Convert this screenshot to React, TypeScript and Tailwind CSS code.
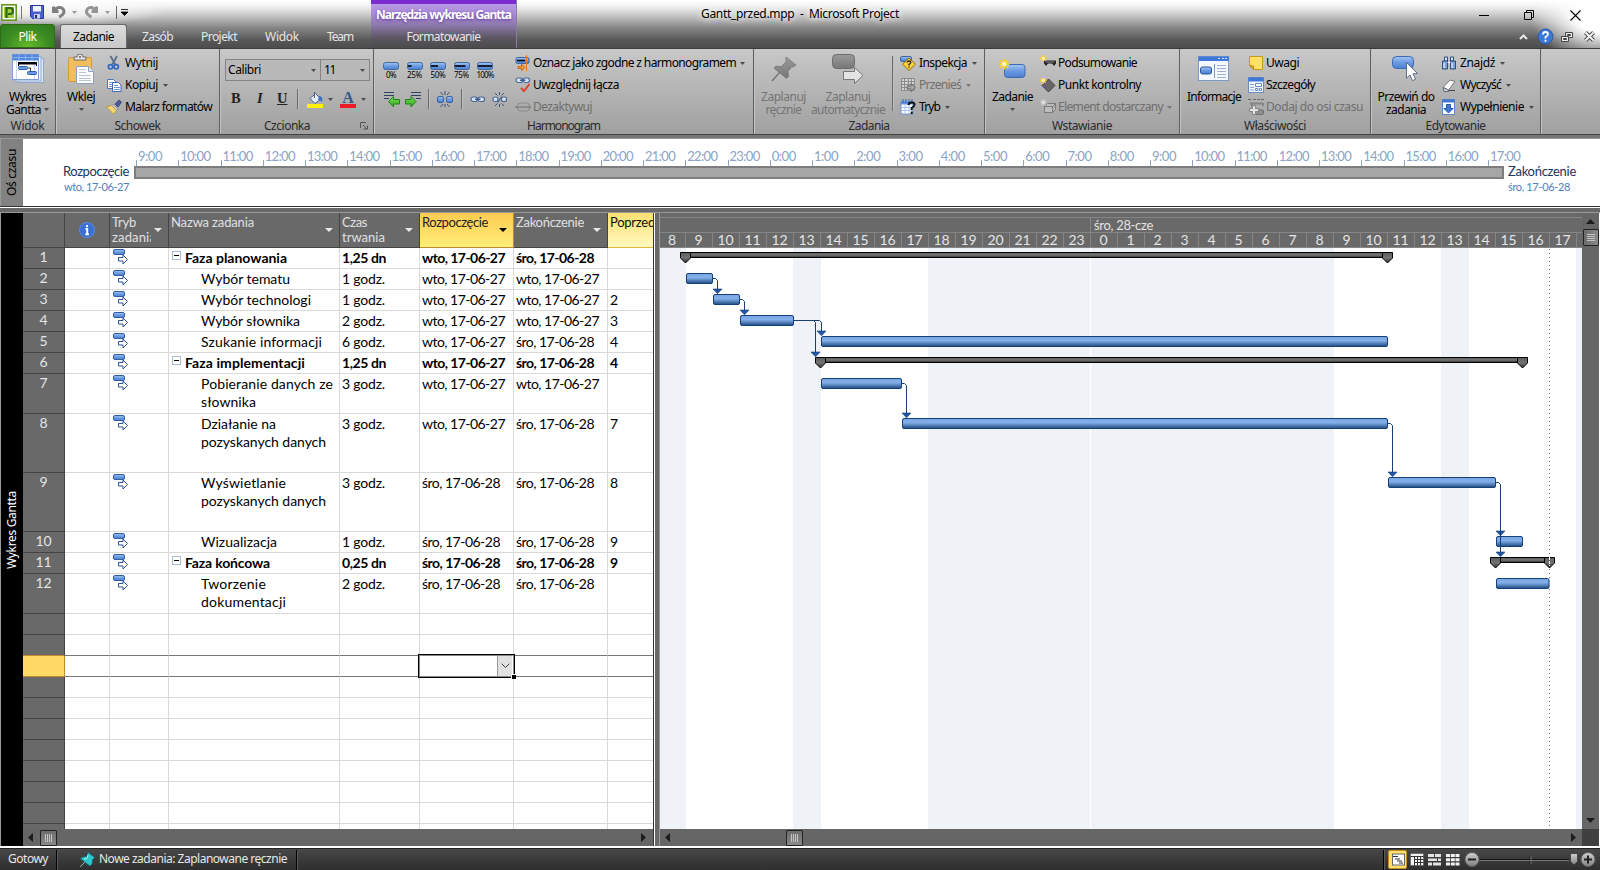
import React, { useLayoutEffect, useRef } from "react";

type TProps = { w?: number; children: string; className?: string };

/** Text run whose tracking is fitted to a given width. */
function T({ w, children, className = "" }: TProps) {
  const ref = useRef<HTMLSpanElement>(null);
  useLayoutEffect(() => {
    const el = ref.current;
    if (!el || !w) return;
    el.style.letterSpacing = "0px";
    const natural = el.getBoundingClientRect();
    const size = Math.max(natural.width, natural.height > 40 ? natural.height : 0);
    const s = (w - size) / children.length;
    el.style.letterSpacing = `${s.toFixed(3)}px`;
  }, [w, children]);
  return (
    <span ref={ref} className={`inline-block shrink-0 whitespace-pre ${className}`}>
      {children}
    </span>
  );
}

function Arrow({ className = "text-[#4c4c4c]" }: { className?: string }) {
  return (
    <svg width="5" height="3" viewBox="0 0 5 3" className={`shrink-0 ${className}`}>
      <path d="M0 0h5L2.5 3z" fill="currentColor" />
    </svg>
  );
}

function Defs() {
  return (
    <svg width="0" height="0" className="absolute">
      <defs>
        <linearGradient id="blue" x1="0" y1="0" x2="0" y2="1">
          <stop offset="0" stopColor="#a4c6f4" />
          <stop offset="0.5" stopColor="#6b9ae0" />
          <stop offset="1" stopColor="#4a7fd0" />
        </linearGradient>
        <linearGradient id="task" x1="0" y1="0" x2="0" y2="1">
          <stop offset="0" stopColor="#7aa7e2" />
          <stop offset="0.42" stopColor="#82afe9" />
          <stop offset="0.55" stopColor="#6c99d2" />
          <stop offset="1" stopColor="#1f4a80" />
        </linearGradient>
        <linearGradient id="sum" x1="0" y1="0" x2="0" y2="1">
          <stop offset="0" stopColor="#5c5c5c" />
          <stop offset="0.5" stopColor="#747474" />
          <stop offset="1" stopColor="#303030" />
        </linearGradient>
        <linearGradient id="gray" x1="0" y1="0" x2="0" y2="1">
          <stop offset="0" stopColor="#9a9a9a" />
          <stop offset="1" stopColor="#777" />
        </linearGradient>
        <linearGradient id="green" x1="0" y1="0" x2="0" y2="1">
          <stop offset="0" stopColor="#7be05a" />
          <stop offset="1" stopColor="#2ba51c" />
        </linearGradient>
        <linearGradient id="knob" x1="0" y1="0" x2="0" y2="1">
          <stop offset="0" stopColor="#cfcfcf" />
          <stop offset="1" stopColor="#808080" />
        </linearGradient>
      </defs>
    </svg>
  );
}

function Svg({ w = 16, h = 16, children, className = "" }: { w?: number; h?: number; children: React.ReactNode; className?: string }) {
  return (
    <svg width={w} height={h} viewBox={`0 0 ${w} ${h}`} className={`shrink-0 ${className}`}>
      {children}
    </svg>
  );
}

const Star = ({ s = 1, gray = false }: { s?: number; gray?: boolean }) => (
  <g transform={`scale(${s})`} stroke={gray ? "#c9c9c9" : "#ffd21e"} strokeWidth="1.4">
    <path d="M4 0v8M0 4h8M1 1l6 6M7 1L1 7" />
    <circle cx="4" cy="4" r="1.8" fill={gray ? "#e0e0e0" : "#fff6b0"} stroke="none" />
  </g>
);

const IcoGantt = () => (
  <Svg w={32} h={30}>
    <rect x="5.5" y="4.500" width="26" height="24" fill="#dfe9f7" stroke="#8fa9d0" />
    <rect x="3" y="2.500" width="26" height="24.500" fill="#e8f0fb" stroke="#8fa9d0" />
    <rect x="0.5" y="0.5" width="26" height="25" fill="#fff" stroke="#7f9fd4" />
    <path d="M.5.500h26v6H.5z" fill="#4f86e0" />
    <path d="M7 1v5M13.500 1v5M20 1v5M1 3.500h25" stroke="#8fb4ee" />
    <path d="M4.500 7v18M22.500 7v18" stroke="#c9d8ee" />
    <path d="M6 8h19v2.500H6z" fill="#000" />
    <path d="M6.500 8v4M24.500 8v4" stroke="#000" strokeWidth="1" />
    <rect x="6.500" y="12.500" width="9" height="3" rx="1" fill="#6b9ae0" stroke="#2b5fa8" />
    <path d="M16 14h2.500v3.500" stroke="#333" fill="none" />
    <rect x="15.500" y="17.500" width="9" height="3" rx="1" fill="#6b9ae0" stroke="#2b5fa8" />
  </Svg>
);

const IcoPaste = () => (
  <Svg w={28} h={31}>
    <rect x="1.500" y="3.500" width="23" height="24" rx="1.500" fill="#f2bd5c" stroke="#d59a35" />
    <path d="M7 6V3h3a2.500 2.500 0 0 1 6 0h3v3z" fill="#e6e6e6" stroke="#6b6b6b" />
    <circle cx="13" cy="3" r="1" fill="#555" />
    <path d="M9.500 12.500h12l5 5v12h-17z" fill="#fff" stroke="#8ea0bd" />
    <path d="M21.500 12.500v5h5" fill="#dfe7f3" stroke="#8ea0bd" />
    <path d="M12 15.500h7M12 18.500h7M12 21.500h12M12 24.500h12M12 26.500h12" stroke="#b9c3d6" />
  </Svg>
);

const IcoCut = () => (
  <Svg>
    <path d="M4.500 1l5 9M11 1L6 10" stroke="#5d6f8c" strokeWidth="1.800" />
    <circle cx="4.500" cy="11.800" r="2.200" fill="none" stroke="#2f66c0" strokeWidth="1.700" />
    <circle cx="10.200" cy="11.800" r="2.200" fill="none" stroke="#2f66c0" strokeWidth="1.700" />
  </Svg>
);
const IcoCopy = () => (
  <Svg>
    <path d="M1.500 2.500h6l2 2v7h-8z" fill="#fff" stroke="#4a76be" />
    <path d="M3 5.500h4M3 7.500h5M3 9.500h5" stroke="#6f97d8" />
    <path d="M6.500 5.500h6l2.500 2.500v6.500H6.500z" fill="#fff" stroke="#3d6bb5" />
    <path d="M8 8.500h4M8 10.500h6M8 12.500h6" stroke="#6f97d8" />
  </Svg>
);
const IcoBrush = () => (
  <Svg>
    <path d="M9 5l4-4 2.500 2L12 8z" fill="#4d5aa8" stroke="#30376e" strokeWidth=".7" />
    <path d="M7 5l5 5-1.500 1.500-5-5z" fill="#c9c9d8" stroke="#777" strokeWidth=".6" />
    <path d="M5.500 6.500l5 5L7 15C5 12 3 10 0 8z" fill="#f3d877" stroke="#b98c24" strokeWidth=".7" />
  </Svg>
);
const IcoBucket = () => (
  <Svg w={16} h={17}>
    <path d="M3 7.500l5.500-5L14 8l-6 4.500z" fill="#e7edf7" stroke="#4c617f" />
    <path d="M7.500 1v6" stroke="#4c617f" />
    <path d="M12 5c3 0 4 3 3 6-1-1-2-2-4-2z" fill="#3872c8" />
    <path d="M0 13h16v4H0z" fill="#fff200" />
  </Svg>
);
const IcoFontColor = () => (
  <div className="flex w-4 shrink-0 flex-col items-center">
    <span className="h-[13px] font-['Liberation_Serif',serif] text-[16px] leading-[13px] font-bold text-[#35588f]">A</span>
    <span className="h-1 w-4 bg-[#ed1c24]" />
  </div>
);
const IcoPct = ({ n }: { n: number }) => (
  <div className="flex w-4 shrink-0 flex-col items-center">
    <Svg w={16} h={8}>
      <rect x=".5" y=".5" width="15" height="7" rx="2" fill="url(#blue)" stroke="#41689f" />
      {n > 0 && <path d={`M1 4h${(n / 100) * 14}`} stroke="#000" strokeWidth="1.600" />}
    </Svg>
    <T w={n === 0 ? 10 : n === 100 ? 17 : 15} className="h-[9px] text-[8px] leading-[10px] text-black">{`${n}%`}</T>
  </div>
);
const IcoDent = ({ out = false }: { out?: boolean }) => (
  <Svg w={17} h={18}>
    <path d={out ? "M1 2.500h10M1 5.500h10M1 8.500h5" : "M6 2.500h10M6 5.500h10M11 8.500h5"} stroke="#2f4161" strokeWidth="1.200" />
    {out ? (
      <path d="M5.500 11.500l5-5v3h6v4.500h-6v3z" fill="url(#green)" stroke="#218614" />
    ) : (
      <path d="M11 11.500l-5-5v3H.5v4.500H6v3z" fill="url(#green)" stroke="#218614" />
    )}
  </Svg>
);
const IcoSplit = () => (
  <Svg>
    <rect x=".5" y="5.500" width="6" height="6" rx="1.500" fill="url(#blue)" stroke="#3b65a5" />
    <rect x="9.500" y="5.500" width="6" height="6" rx="1.500" fill="url(#blue)" stroke="#3b65a5" />
    <path d="M8 0v4M8 13v3M3.500 1l2.500 3M12.500 1L10 4M3.500 16L6 13M12.500 16L10 13" stroke="#3d5577" />
  </Svg>
);
const Chain = () => (
  <>
    <rect x="1" y="5" width="6.500" height="4.500" rx="2.200" fill="#d9e4f5" stroke="#4a6796" strokeWidth="1.200" />
    <rect x="8" y="5" width="6.500" height="4.500" rx="2.200" fill="#d9e4f5" stroke="#4a6796" strokeWidth="1.200" />
    <path d="M5 7.200h5.500" stroke="#3b5787" strokeWidth="1.400" />
  </>
);
const IcoLink = () => (
  <Svg h={15}>
    <Chain />
  </Svg>
);
const IcoUnlink = () => (
  <Svg h={15}>
    <rect x="1" y="5" width="5" height="4.500" rx="2" fill="#d9e4f5" stroke="#4a6796" strokeWidth="1.200" />
    <rect x="9.500" y="5" width="5" height="4.500" rx="2" fill="#d9e4f5" stroke="#4a6796" strokeWidth="1.200" />
    <path d="M7.500 0v3M7.500 12v3M3 1l2.500 2.500M12 1L9.500 3.500M3 14l2.500-2.500M12 14l-2.500-2.500M9.500 4.500L6 10.500" stroke="#3d5577" />
  </Svg>
);
const IcoOnTrack = () => (
  <Svg>
    <rect x="1" y="2.500" width="13" height="6" rx="1.500" fill="url(#blue)" stroke="#41689f" />
    <path d="M2 5.500h8" stroke="#000" strokeWidth="1.500" />
    <path d="M11.500 0v16" stroke="#e77b19" />
    <path d="M3 11.500h3.500V9L10 12.500 6.500 15.500V13.500H3z" fill="#ff9a2e" stroke="#b85a0c" strokeWidth=".8" />
  </Svg>
);
const IcoRespect = () => (
  <Svg>
    <g transform="translate(0,-4)">
      <Chain />
    </g>
    <path d="M6 11l3 3 5.500-7" fill="none" stroke="#e0402a" strokeWidth="2" />
  </Svg>
);
const IcoInactive = () => (
  <Svg>
    <rect x="2.500" y="4" width="12" height="8" rx="3" fill="none" stroke="#8a8a8a" />
    <path d="M0 8h16" stroke="#6f6f6f" />
  </Svg>
);
const IcoPinBig = () => (
  <Svg w={26} h={26}>
    <path d="M1 25l8-9" stroke="#777" strokeWidth="1.500" />
    <path d="M15 1l10 8-3 2-1-.5-4 5 .5 5-2 2L3 12l2-2 5 .8 5-4.800V3z" fill="url(#gray)" stroke="#6f6f6f" strokeWidth=".7" />
  </Svg>
);
const IcoAuto = () => (
  <Svg w={32} h={30}>
    <rect x=".5" y=".5" width="22" height="14" rx="4" fill="url(#gray)" stroke="#6d6d6d" />
    <path d="M11.500 17.500h11v-4l8.500 8-8.500 8v-4h-11z" fill="#e4e4e4" stroke="#777" />
  </Svg>
);
const IcoInspect = () => (
  <Svg>
    <rect x=".5" y="1.500" width="11" height="5" rx="1.500" fill="url(#blue)" stroke="#41689f" />
    <path d="M9 3l6.500 6.200L9 15.500 2.500 9.200z" fill="#ffd23c" stroke="#8d6b00" />
    <path d="M7.200 7.500q0-1.500 1.800-1.500t1.800 1.400q0 1-1.800 2v1M9 11.500v1.300" fill="none" stroke="#222" strokeWidth="1.300" />
  </Svg>
);
const IcoMove = () => (
  <Svg>
    <path d="M1.500 1.500h13v12h-13zM1.500 4.500h13M1.500 7.500h13M1.500 10.500h13M4.500 1.500v12M8.500 1.500v12M11.500 1.500v12" fill="#d3d3d3" stroke="#858585" strokeWidth=".9" />
    <path d="M7 9h4V6.500l4.500 4-4.500 4V12H7z" fill="#a5a5a5" stroke="#6b6b6b" />
  </Svg>
);
const IcoMode = () => (
  <Svg>
    <rect x="1" y="2.500" width="12" height="12.500" fill="#fff" stroke="#6e93cf" />
    <path d="M1 2.500h12v3H1z" fill="#5f8fe0" />
    <path d="M3 0v4M6 0v4M9 0v4M12 0v4" stroke="#3966b5" />
    <path d="M1 8.500h12M1 11.500h12M5 6v9M9 6v9" stroke="#a9c2e8" />
    <path d="M8.500 6q.3-2.500 3.200-2.500t2.800 2.300q0 1.500-2.800 3V11M11.700 12.500v2.500" fill="none" stroke="#111" strokeWidth="2" />
  </Svg>
);
const IcoNewTask = () => (
  <Svg w={27} h={20}>
    <rect x="5.500" y="5.500" width="20.500" height="13" rx="3" fill="url(#blue)" stroke="#3e69b0" />
    <Star s={1.3} />
  </Svg>
);
const IcoSummary = () => (
  <Svg>
    <path d="M4 5.500h12v3l-2 2.500-2-2.500H8L6 11 4 8.500z" fill="#222" />
    <path d="M5.500 7h9" stroke="#888" />
    <Star s={0.85} />
  </Svg>
);
const IcoMilestone = () => (
  <Svg>
    <path d="M8.500 2l6.500 6.500L8.500 15 2 8.500z" fill="#666" stroke="#444" />
    <Star s={0.85} />
  </Svg>
);
const IcoDeliver = () => (
  <Svg>
    <path d="M4.500 7.500h8v6h-8zM4.500 7.500l3-3h8l-3 3M15.500 4.500v6l-3 3" fill="#bdbdbd" stroke="#7b7b7b" />
    <Star s={0.85} gray />
  </Svg>
);
const IcoInfo = () => (
  <Svg w={32} h={26}>
    <rect x=".5" y=".5" width="30" height="24" fill="#f5f9ff" stroke="#7d9bc9" />
    <path d="M.5.500h30.500v4.500H.5z" fill="#3f78d8" />
    <path d="M20 2.500h2M24 2.500h2M27 2.500h2" stroke="#cfe0fa" />
    <rect x="2.500" y="11" width="11" height="7" rx="2" fill="url(#blue)" stroke="#2c5598" />
    <path d="M16.500 8v14" stroke="#7e99c4" />
    <path d="M19 9.500h9M19 12.500h9M19 15.500h9M19 18.500h9M19 21.500h9" stroke="#9fb1cd" />
  </Svg>
);
const IcoNote = () => (
  <Svg>
    <path d="M1.500 1.500h13v13h-9l-4-4z" fill="#ffdf67" stroke="#c99a1a" />
    <path d="M1.500 10.500l4 4v-3.500z" fill="#e2a921" stroke="#a9790e" strokeWidth=".7" />
  </Svg>
);
const IcoDetails = () => (
  <Svg>
    <rect x=".5" y=".5" width="15" height="15" fill="#eef4fd" stroke="#6b8cc0" />
    <path d="M.5.500h15v4H.5z" fill="#3f78d8" />
    <path d="M2 7.500h4M2 10.500h4M2 13h4" stroke="#8fa6cb" />
    <path d="M7.500 6.500h6v3h-6zM7.500 11.500h2.500v2H7.500zM11.500 11.500h2v2h-2z" fill="#fff" stroke="#6b8cc0" />
  </Svg>
);
const IcoTimelineAdd = () => (
  <Svg w={17}>
    <path d="M0 .500h3M5 .500h3M9 .500h3M13 .500h3" stroke="#666" />
    <path d="M2 4.500h13M4 4v4M15 4v3" stroke="#858585" strokeWidth="2" />
    <rect x="6.500" y="11" width="9" height="4.500" rx="1" fill="#8e8e8e" stroke="#6f6f6f" />
    <path d="M4.500 6.500h3v3h3v3h-3v3h-3v-3h-3v-3h3z" fill="#e3e3e3" stroke="#858585" />
  </Svg>
);
const IcoScroll = () => (
  <Svg w={28} h={26}>
    <rect x=".5" y=".5" width="21" height="12" rx="4" fill="url(#blue)" stroke="#3e69b0" />
    <path d="M14.500 6.500l11 11-4.500.3 2.500 5.500-3 1.400-2.500-5.700-3.500 3.200z" fill="#fff" stroke="#5c6f8f" />
  </Svg>
);
const IcoFind = () => (
  <Svg>
    <path d="M3.500 2h3v4h-3zM9.500 2h3v4h-3z" fill="#dce7f7" stroke="#2a4c86" />
    <path d="M1.500 6h5v8h-5zM9.500 6h5v8h-5z" fill="#7fa3dc" stroke="#2a4c86" />
    <path d="M6.500 7.500h3M3 8v5M11 8v5" stroke="#fff" />
  </Svg>
);
const IcoClear = () => (
  <Svg>
    <path d="M2 10.500L9 3l5 1.500-6.500 8.500z" fill="#fff" stroke="#777" />
    <path d="M2 10.500l5.500 2.500v1.500H3z" fill="#cdd8ea" stroke="#667" />
    <path d="M8 13.500h6" stroke="#444" />
  </Svg>
);
const IcoFill = () => (
  <Svg>
    <rect x="1.500" y=".5" width="12" height="15" fill="#fff" stroke="#5f86c6" />
    <path d="M1.500.500h12v3h-12z" fill="#3f78d8" />
    <path d="M5.500 5.500h4v4h2.500L7.500 14 3 9.500h2.500z" fill="#3f78d8" stroke="#2655a8" />
  </Svg>
);

function Row({ icon, text, w, arrow = false, dim = false, gap = "gap-[3px]" }: { icon: React.ReactNode; text: string; w: number; arrow?: boolean; dim?: boolean; gap?: string }) {
  return (
    <div className={`flex h-[22px] items-center ${gap} ${dim ? "text-[#6f6f6f]" : "text-black"}`}>
      {icon}
      <T w={w}>{text}</T>
      {arrow && <Arrow className={dim ? "ml-[2px] text-[#777]" : "ml-[2px] text-[#4c4c4c]"} />}
    </div>
  );
}

function Big({ icon, width, children, dim = false }: { icon: React.ReactNode; width: string; children: React.ReactNode; dim?: boolean }) {
  return (
    <div className={`flex shrink-0 flex-col items-center leading-[13px] ${width} ${dim ? "text-[#757575]" : "text-black"}`}>
      <div className="flex h-[38px] items-center justify-center pb-[4px]">{icon}</div>
      {children}
    </div>
  );
}

function Group({ width, label, lw, children, launcher = false }: { width: string; label: string; lw: number; children: React.ReactNode; launcher?: boolean }) {
  return (
    <div className={`flex h-[85px] shrink-0 flex-col border-r border-[#5f5f5f] pt-[3px] shadow-[1px_0_0_#c4c4c4] ${width}`}>
      <div className="flex h-[66px]">{children}</div>
      <div className="flex h-4 items-center justify-center text-[#2a2a2a]">
        <span className={launcher ? "flex flex-1 justify-center" : ""}>
          <T w={lw}>{label}</T>
        </span>
        {launcher && (
          <Svg w={16} h={8} className="mr-[3px]">
            <path d="M6.500 6V.500H12M9 3l4 4M13.500 3.500V7H9.500" stroke="#555" fill="none" />
          </Svg>
        )}
      </div>
    </div>
  );
}

function Sep({ className }: { className: string }) {
  return <span className={`w-px shrink-0 bg-[#6a6a6a] shadow-[1px_0_0_#c0c0c0] ${className}`} />;
}

function Ribbon() {
  return (
    <div className="flex h-[86px] border-b border-[#444] bg-linear-to-b from-[#c8c8c8] to-[#a0a0a0] text-[12px]">
      <Group width="w-14" label="Widok" lw={34}>
        <Big width="w-[55px]" icon={<IcoGantt />}>
          <T w={37}>Wykres</T>
          <span className="flex items-center gap-[3px]">
            <T w={35}>Gantta</T>
            <Arrow />
          </span>
        </Big>
      </Group>
      <Group width="w-[164px]" label="Schowek" lw={46}>
        <Big width="w-[50px]" icon={<IcoPaste />}>
          <T w={28}>Wklej</T>
          <span className="flex h-3 items-center">
            <Arrow />
          </span>
        </Big>
        <div className="flex flex-col">
          <Row icon={<IcoCut />} text="Wytnij" w={33} />
          <Row icon={<IcoCopy />} text="Kopiuj" w={33} arrow />
          <Row icon={<IcoBrush />} text="Malarz formatów" w={87} />
        </div>
      </Group>
      <Group width="w-[154px]" label="Czcionka" lw={46} launcher>
        <div className="flex flex-col pt-[7px] pl-[5px]">
          <div className="flex h-[22px] w-[145px] border border-[#858585] bg-[#b9b9b9]">
            <div className="flex w-[95px] items-center justify-between border-r border-[#858585] pr-1 pl-[2px]">
              <T w={33}>Calibri</T>
              <Arrow />
            </div>
            <div className="flex flex-1 items-center justify-between pr-1 pl-[3px]">
              <T w={11}>11</T>
              <Arrow />
            </div>
          </div>
          <div className="mt-[6px] flex h-6 items-center pl-[6px] font-['Liberation_Serif',serif] text-[14.500px] text-[#222]">
            <span className="w-6 font-bold">B</span>
            <span className="w-[22px] pl-[2px] font-bold italic">I</span>
            <span className="w-[15px] font-bold underline">U</span>
            <Sep className="mr-[9px] ml-[5px] h-5" />
            <IcoBucket />
            <span className="ml-[5px]">
              <Arrow />
            </span>
            <span className="ml-[7px]">
              <IcoFontColor />
            </span>
            <span className="ml-[5px]">
              <Arrow />
            </span>
          </div>
        </div>
      </Group>
      <Group width="w-[380px]" label="Harmonogram" lw={73}>
        <div className="flex w-[141px] flex-col pt-[10px] pl-[9px]">
          <div className="flex h-[17px] gap-[7.500px]">
            {[0, 25, 50, 75, 100].map((n) => (
              <IcoPct key={n} n={n} />
            ))}
          </div>
          <div className="mt-[10px] flex h-5 items-center">
            <IcoDent out />
            <span className="w-[5px]" />
            <IcoDent />
            <Sep className="mr-2 ml-[6px] h-5" />
            <IcoSplit />
            <Sep className="mr-2 ml-2 h-5" />
            <IcoLink />
            <span className="w-[6px]" />
            <IcoUnlink />
          </div>
        </div>
        <div className="flex flex-col">
          <Row icon={<IcoOnTrack />} text="Oznacz jako zgodne z harmonogramem" w={203} arrow gap="gap-[2px]" />
          <Row icon={<IcoRespect />} text="Uwzględnij łącza" w={86} gap="gap-[2px]" />
          <Row icon={<IcoInactive />} text="Dezaktywuj" w={59} dim gap="gap-[2px]" />
        </div>
      </Group>
      <Group width="w-[231px]" label="Zadania" lw={41}>
        <span className="w-[2px]" />
        <Big width="w-[55px]" icon={<IcoPinBig />} dim>
          <T w={45}>Zaplanuj</T>
          <T w={36}>ręcznie</T>
        </Big>
        <Big width="w-[74px]" icon={<IcoAuto />} dim>
          <T w={45}>Zaplanuj</T>
          <T w={74}>automatycznie</T>
        </Big>
        <Sep className="mt-[4px] mr-[7px] ml-[7px] h-[55px]" />
        <div className="flex flex-col">
          <Row icon={<IcoInspect />} text="Inspekcja" w={48} arrow />
          <Row icon={<IcoMove />} text="Przenieś" w={42} arrow dim />
          <Row icon={<IcoMode />} text="Tryb" w={21} arrow />
        </div>
      </Group>
      <Group width="w-[195px]" label="Wstawianie" lw={60}>
        <Big width="w-[55px]" icon={<IcoNewTask />}>
          <T w={41}>Zadanie</T>
          <span className="flex h-3 items-center">
            <Arrow />
          </span>
        </Big>
        <div className="flex flex-col">
          <Row icon={<IcoSummary />} text="Podsumowanie" w={79} gap="gap-[2px]" />
          <Row icon={<IcoMilestone />} text="Punkt kontrolny" w={83} gap="gap-[2px]" />
          <Row icon={<IcoDeliver />} text="Element dostarczany" w={105} arrow dim gap="gap-[2px]" />
        </div>
      </Group>
      <Group width="w-[191px]" label="Właściwości" lw={62}>
        <Big width="w-[68px]" icon={<IcoInfo />}>
          <T w={54}>Informacje</T>
        </Big>
        <div className="flex flex-col">
          <Row icon={<IcoNote />} text="Uwagi" w={33} gap="gap-[2px]" />
          <Row icon={<IcoDetails />} text="Szczegóły" w={49} gap="gap-[2px]" />
          <Row icon={<IcoTimelineAdd />} text="Dodaj do osi czasu" w={97} dim gap="gap-[1px]" />
        </div>
      </Group>
      <Group width="w-[170px]" label="Edytowanie" lw={60}>
        <Big width="w-[70px]" icon={<IcoScroll />}>
          <T w={57}>Przewiń do</T>
          <T w={40}>zadania</T>
        </Big>
        <div className="flex flex-col">
          <Row icon={<IcoFind />} text="Znajdź" w={35} arrow />
          <Row icon={<IcoClear />} text="Wyczyść" w={41} arrow />
          <Row icon={<IcoFill />} text="Wypełnienie" w={64} arrow />
        </div>
      </Group>
    </div>
  );
}

function TitleBar() {
  return (
    <div className="relative flex h-[49px] border-b border-[#3c3c3c] bg-[linear-gradient(to_bottom,#ffffff_0px,#f2f2f2_6px,#c4c4c4_16px,#858585_28px,#585858_40px,#4c4c4c_48px)] text-[12px]">
      <div className="flex w-[371px] shrink-0 flex-col bg-[radial-gradient(ellipse_110px_16px_at_60px_10px,#ffffffb0_40%,transparent)]">
        <div className="flex h-[25px] items-center pl-px">
          <Svg w={16} h={17}>
            <rect x=".8" y=".8" width="14.400" height="15.400" fill="#fff" stroke="#5d9413" strokeWidth="1.500" />
            <path d="M3 3h10v11H3z" fill="#9fca3a" />
            <path d="M5.500 14V4h3.500a2.900 2.900 0 0 1 0 6H7" fill="none" stroke="#2f6b0b" strokeWidth="2.200" />
          </Svg>
          <span className="mx-1 h-[13px] w-px bg-[#777]" />
          <Svg w={14} h={14} className="ml-1">
            <path d="M.5.500h13v13h-11l-2-2z" fill="#4a5fd0" stroke="#27359a" />
            <path d="M3 1h8v5.500H3z" fill="#eef3ff" />
            <path d="M4 9h6v4.500H4z" fill="#c9d2f0" />
            <path d="M5 10h2v3H5z" fill="#222a70" />
          </Svg>
          <Svg w={14} h={14} className="ml-2">
            <path d="M1.500 1.500v5h5M2 6C4.500 2 9 1.500 11 4s1 6-4 8" fill="none" stroke="#7f7f7f" strokeWidth="3" />
          </Svg>
          <span className="ml-[6px]">
            <Arrow className="text-[#999]" />
          </span>
          <Svg w={14} h={14} className="ml-2">
            <path d="M11.500 1.500v5h-5M11 6C8.500 2 4.500 1.500 2.500 4s-1 6 4 8" fill="none" stroke="#959595" strokeWidth="3" />
          </Svg>
          <span className="ml-[6px]">
            <Arrow className="text-[#999]" />
          </span>
          <span className="mx-1 ml-[6px] h-[13px] w-px bg-[#666]" />
          <Svg w={7} h={7}>
            <path d="M0 .500h7M0 3h7L3.500 6.500z" stroke="#000" fill="#000" strokeWidth=".8" />
          </Svg>
        </div>
        <div className="flex h-6 items-center text-[#e6e6e6]">
          <div className="flex h-6 w-[55px] items-center justify-center rounded-t-[3px] border border-[#2e6b12] bg-[radial-gradient(ellipse_at_bottom,#66bb2a,#3a8a22_60%,#2f7a20)] pt-px text-white">
            <T w={18}>Plik</T>
          </div>
          <div className="ml-[5px] flex h-6 w-[67px] items-center justify-center rounded-t-[3px] border border-b-0 border-[#6a6a6a] bg-linear-to-b from-[#dcdcdc] to-[#c8c8c8] pt-px text-black">
            <T w={41}>Zadanie</T>
          </div>
          <T w={31} className="ml-[15px] pt-[2px]">
            Zasób
          </T>
          <T w={36} className="ml-7 pt-[2px]">
            Projekt
          </T>
          <T w={34} className="ml-7 pt-[2px]">
            Widok
          </T>
          <T w={26} className="ml-7 pt-[2px]">
            Team
          </T>
        </div>
      </div>
      <div className="flex h-12 w-[146px] shrink-0 flex-col items-center border-r border-[#8a7aa5] bg-[linear-gradient(to_bottom,#b899e6_4px,#a98bd6_14px,#8b77a8_26px,#5b5660_38px,#4c4c4c_47px)]">
        <div className="h-1 w-full bg-[#7a2bd2]" />
        <div className="flex h-[21px] items-center pt-[2px] font-bold text-white [text-shadow:0_1px_3px_#5f35a0]">
          <T w={135}>Narzędzia wykresu Gantta</T>
        </div>
        <div className="flex h-6 items-center pt-[2px] text-[#e6e6e6]">
          <T w={74}>Formatowanie</T>
        </div>
      </div>
      <div className="flex flex-1 flex-col bg-[radial-gradient(ellipse_70px_50px_at_1083px_14px,#ffffff_35%,#ffffff00)]">
        <div className="flex h-[27px] items-center">
          <T w={198} className="ml-[184px] text-black [text-shadow:0_0_6px_#fff,0_0_8px_#fff]">
            {"Gantt_przed.mpp  -  Microsoft Project"}
          </T>
          <Svg w={102} h={12} className="mt-[2px] ml-[580px]">
            <path d="M0 6.500h10" stroke="#000" />
            <path d="M45.500 3.500h7v7h-7zM47.500 3.500v-2h7v7h-2" stroke="#000" fill="none" />
            <path d="M91.500 1.500l10 10M101.500 1.500l-10 10" stroke="#000" strokeWidth="1.100" />
          </Svg>
        </div>
        <div className="flex h-[19px] items-center">
          <Svg w={80} h={17} className="ml-[1002px]">
            <path d="M1 11l3.500-3.500L8 11" stroke="#e8e8e8" strokeWidth="2" fill="none" />
            <circle cx="26.500" cy="8.500" r="7.500" fill="#3c78d8" stroke="#2a59ad" />
            <path d="M24 6.500q0-2.500 2.500-2.500T29 6.300q0 1.400-2.500 2.700v1.500M26.500 11.700v2" stroke="#fff" strokeWidth="1.800" fill="none" />
            <path d="M46.500 4.500h7v5h-7z" stroke="#444" fill="#eee" />
            <path d="M48.500 6.500h3v1h-3z" stroke="#444" fill="#999" />
            <path d="M42.500 8.500h7v5h-7z" stroke="#444" fill="#eee" />
            <path d="M44.500 10.500h3v1h-3z" stroke="#444" fill="#999" />
            <path d="M66.500 4.500l8 8M74.500 4.500l-8 8" stroke="#4c4c4c" strokeWidth="4" />
            <path d="M66.500 4.500l8 8M74.500 4.500l-8 8" stroke="#f4f4f4" strokeWidth="2" />
          </Svg>
        </div>
      </div>
    </div>
  );
}

const LATO = "font-['Lato','Noto_Sans',sans-serif]";

function Timeline() {
  const hours = Array.from({ length: 33 }, (_, i) => (9 + i) % 24);
  return (
    <div className="flex h-[67px] border-l border-[#999] bg-white">
      <div className="flex w-[22px] items-center justify-center bg-[#828282]">
        <span className="rotate-180 text-[12px] text-black [writing-mode:vertical-rl]">
          <T w={47}>Oś czasu</T>
        </span>
      </div>
      <div className={`flex w-[111px] flex-col items-end pt-[23px] pr-[5px] ${LATO}`}>
        <T w={66} className="h-[17px] text-[13px] leading-[18px] text-[#17365d]">
          Rozpoczęcie
        </T>
        <T w={65} className="h-4 text-[11px] leading-4 text-[#4f81bd]">
          wto, 17-06-27
        </T>
      </div>
      <div className="flex w-[1370px] flex-col pt-[9px]">
        <div className="flex h-[18px] pl-[2px]">
          {hours.map((h, i) => (
            <div key={i} className="flex w-[42.250px] shrink-0 items-end">
              <span className="h-[6px] w-px bg-[#8ea5c5]" />
              <T w={h < 10 ? 25 : 31} className={`h-[18px] pl-px text-[13px] leading-4 text-[#8ba3c4] ${LATO}`}>
                {`${h}:00`}
              </T>
            </div>
          ))}
        </div>
        <div className="h-[13px] border-2 border-[#7d7d7d] bg-[#a6a6a6]" />
      </div>
      <div className={`flex flex-1 flex-col items-start pt-[23px] pl-1 ${LATO}`}>
        <T w={68} className="h-[17px] text-[13px] leading-[18px] text-[#17365d]">
          Zakończenie
        </T>
        <T w={62} className="h-4 text-[11px] leading-4 text-[#4f81bd]">
          śro, 17-06-28
        </T>
      </div>
    </div>
  );
}

type Line = [string, number];
type Task = { id: number; h: string; sum?: boolean; name: Line[]; dur: string; start: string; end: string; pred?: string };
const TASKS: Task[] = [
  { id: 1, h: "h-[21px]", sum: true, name: [["Faza planowania", 102]], dur: "1,25 dn", start: "wto, 17-06-27", end: "śro, 17-06-28" },
  { id: 2, h: "h-[21px]", name: [["Wybór tematu", 89]], dur: "1 godz.", start: "wto, 17-06-27", end: "wto, 17-06-27" },
  { id: 3, h: "h-[21px]", name: [["Wybór technologi", 110]], dur: "1 godz.", start: "wto, 17-06-27", end: "wto, 17-06-27", pred: "2" },
  { id: 4, h: "h-[21px]", name: [["Wybór słownika", 99]], dur: "2 godz.", start: "wto, 17-06-27", end: "wto, 17-06-27", pred: "3" },
  { id: 5, h: "h-[21px]", name: [["Szukanie informacji", 121]], dur: "6 godz.", start: "wto, 17-06-27", end: "śro, 17-06-28", pred: "4" },
  { id: 6, h: "h-[21px]", sum: true, name: [["Faza implementacji", 120]], dur: "1,25 dn", start: "wto, 17-06-27", end: "śro, 17-06-28", pred: "4" },
  { id: 7, h: "h-[40px]", name: [["Pobieranie danych ze", 132], ["słownika", 55]], dur: "3 godz.", start: "wto, 17-06-27", end: "wto, 17-06-27" },
  { id: 8, h: "h-[59px]", name: [["Działanie na", 75], ["pozyskanych danych", 125]], dur: "3 godz.", start: "wto, 17-06-27", end: "śro, 17-06-28", pred: "7" },
  { id: 9, h: "h-[59px]", name: [["Wyświetlanie", 85], ["pozyskanych danych", 125]], dur: "3 godz.", start: "śro, 17-06-28", end: "śro, 17-06-28", pred: "8" },
  { id: 10, h: "h-[21px]", name: [["Wizualizacja", 76]], dur: "1 godz.", start: "śro, 17-06-28", end: "śro, 17-06-28", pred: "9" },
  { id: 11, h: "h-[21px]", sum: true, name: [["Faza końcowa", 85]], dur: "0,25 dn", start: "śro, 17-06-28", end: "śro, 17-06-28", pred: "9" },
  { id: 12, h: "h-[40px]", name: [["Tworzenie", 65], ["dokumentacji", 85]], dur: "2 godz.", start: "śro, 17-06-28", end: "śro, 17-06-28" },
];

const COLS = "grid grid-cols-[42px_45px_59px_171px_80px_94px_94px_45px]";
const CELL = "border-r border-b border-[#d9d9d9] pl-[2px] pt-px leading-[18px]";

const IcoAutoMode = () => (
  <Svg w={16} h={17}>
    <rect x=".5" y=".5" width="11" height="5" rx="1.500" fill="url(#blue)" stroke="#2f5ea8" />
    <path d="M5.500 8.500h4.500v-2.500l4.500 4.500-4.500 4.500v-3h-4.500z" fill="#fff" stroke="#2d4fa0" />
  </Svg>
);

function DateText({ v }: { v: string }) {
  return <T w={v.startsWith("w") ? 83 : 78}>{v}</T>;
}

function HeadCell({ lines, w, arrow = true, className = "", arrowClass = "text-[#e8e8e8]" }: { lines: Line[]; w?: string; arrow?: boolean; className?: string; arrowClass?: string }) {
  return (
    <div className={`flex overflow-hidden border-r border-b border-[#444] pt-[2px] pl-[2px] text-[13px] leading-[15px] ${className}`}>
      <div className={`flex shrink-0 flex-col items-start overflow-hidden ${w ?? ""}`}>
        {lines.map(([t, n]) => (
          <T key={t} w={n}>
            {t}
          </T>
        ))}
      </div>
      {arrow && (
        <svg width="8" height="4" viewBox="0 0 8 4" className={`mt-[13px] mr-[6px] ml-auto shrink-0 ${arrowClass}`}>
          <path d="M0 0h8L4 4z" fill="currentColor" />
        </svg>
      )}
    </div>
  );
}

function Sheet() {
  const blanks = Array.from({ length: 11 }, (_, i) => i);
  return (
    <div className={`relative flex h-[616px] w-[630px] shrink-0 flex-col overflow-hidden bg-white text-[14px] ${LATO}`}>
      <div className={`${COLS} h-[35px] shrink-0 bg-[#696969] text-[#e0e0e0]`}>
        <div className="border-r border-b border-[#444]" />
        <div className="flex items-center justify-center border-r border-b border-[#444]">
          <Svg>
            <circle cx="8" cy="8" r="7.500" fill="#3b6fd4" stroke="#5b8ae0" />
            <path d="M8 3v2.200M6.500 7h1.700v5M6.300 12.200h3.600" stroke="#fff" strokeWidth="1.900" fill="none" />
          </Svg>
        </div>
        <HeadCell lines={[["Tryb", 24], ["zadania", 44]]} w="w-[39px]" />
        <HeadCell lines={[["Nazwa zadania", 83]]} />
        <HeadCell lines={[["Czas", 25], ["trwania", 43]]} />
        <HeadCell lines={[["Rozpoczęcie", 66]]} className="border-[#c08a30] bg-linear-to-b from-[#ffcb50] to-[#ffee78] text-[#222]" arrowClass="text-black" />
        <HeadCell lines={[["Zakończenie", 68]]} />
        <HeadCell lines={[["Poprzedniki", 64]]} arrow={false} className="border-r-0 border-b-[#e0b83a] bg-linear-to-b from-[#ffe070] to-[#fff8c0] text-[#111]" />
      </div>
      {TASKS.map((t) => (
        <div key={t.id} className={`${COLS} ${t.h} shrink-0 ${t.sum ? "font-bold" : ""}`}>
          <div className="border-r border-b border-[#444] bg-[#696969] text-center text-[14px] leading-[18px] font-normal text-[#e4e4e4]">{t.id}</div>
          <div className={CELL} />
          <div className={`${CELL} flex pl-[3px]`}>
            <IcoAutoMode />
          </div>
          <div className={`${CELL} flex`}>
            {t.sum ? (
              <span className="mt-[2px] mr-1 ml-px flex h-[9px] w-[9px] shrink-0 items-center justify-center border border-[#a9bdd6]">
                <span className="h-px w-[5px] bg-black" />
              </span>
            ) : (
              <span className="w-[30px] shrink-0" />
            )}
            <div className="flex flex-col items-start">
              {t.name.map(([s, w]) => (
                <T key={s} w={w}>
                  {s}
                </T>
              ))}
            </div>
          </div>
          <div className={CELL}>
            <T w={t.sum ? 44 : 43}>{t.dur}</T>
          </div>
          <div className={CELL}>
            <DateText v={t.start} />
          </div>
          <div className={CELL}>
            <DateText v={t.end} />
          </div>
          <div className="border-b border-[#d9d9d9] pt-px pl-[2px] leading-[18px]">{t.pred ?? ""}</div>
        </div>
      ))}
      {blanks.map((i) => {
        const edge = i === 1 || i === 2 ? "border-b-[#777]" : "";
        return (
          <div key={i} className={`${COLS} h-[21px] shrink-0`}>
            <div className={i === 2 ? "border-r border-b border-[#c08a30] bg-[#ffd966]" : `border-r border-b border-[#444] bg-[#696969] ${i === 1 ? "border-b-[#c08a30]" : ""}`} />
            {[0, 1, 2, 3, 4, 5, 6].map((c) => (
              <div key={c} className={`border-b ${c < 6 ? "border-r" : ""} border-[#d9d9d9] ${edge}`} />
            ))}
          </div>
        );
      })}
      <div className="absolute top-[441px] left-[395px] flex h-6 w-[97px] justify-end border-2 border-black bg-white pr-px outline-1 -outline-offset-2 outline-[#888]">
        <div className="flex w-[15px] items-center justify-center border-l border-[#999] bg-[#e1e1e1]">
          <Svg w={9} h={6}>
            <path d="M.7.700L4.500 4.500 8.300.700" stroke="#444" fill="none" />
          </Svg>
        </div>
        <span className="absolute -right-[3px] -bottom-[3px] h-[5px] w-[5px] border-t border-l border-white bg-black" />
      </div>
    </div>
  );
}

function TaskBar({ x1, x2, y }: { x1: number; x2: number; y: number }) {
  return <rect x={x1 + 0.5} y={y + 0.5} width={x2 - x1 - 1} height="10" rx="1.500" fill="url(#task)" stroke="#163f78" />;
}
function SumBar({ x1, x2, y }: { x1: number; x2: number; y: number }) {
  const cap = (x: number) => <path d={`M${x - 5} ${y + 0.5}h10v5.500l-5 5-5-5z`} fill="url(#sum)" stroke="#000" />;
  return (
    <g>
      <rect x={x1} y={y + 0.5} width={x2 - x1} height="5" fill="url(#sum)" stroke="#000" />
      {cap(x1)}
      {cap(x2)}
    </g>
  );
}
function Link({ x1, y1, x2, y2 }: { x1: number; y1: number; x2: number; y2: number }) {
  return (
    <g>
      <path d={`M${x1} ${y1}H${x2 - 2}l2 2V${y2 + 4}`} fill="none" stroke="#163f78" />
      <path d={`M${x2 - 4.500} ${y2}h9l-4.500 4.800z`} fill="#1f57a5" stroke="#163f78" strokeWidth=".6" />
    </g>
  );
}

function Chart() {
  const hours = Array.from({ length: 33 }, (_, i) => (9 + i) % 24);
  return (
    <div className="flex w-[922px] shrink-0 flex-col">
      <div className={`flex h-[35px] flex-col border-b border-[#858585] bg-[#696969] text-[14px] text-[#e4e4e4] ${LATO}`}>
        <div className="h-[5px] border-b border-[#858585]" />
        <div className="flex h-[15px] border-b border-[#858585]">
          <div className="w-[431px] shrink-0 border-r border-[#858585]" />
          <T w={62} className="pl-[3px] text-[13px] leading-[15px]">
            śro, 28-cze
          </T>
        </div>
        <div className="flex h-[14px] leading-[13px]">
          <div className="w-[26px] shrink-0 border-r border-[#858585] pr-px text-center">8</div>
          {hours.map((h, i) => (
            <div key={i} className="w-[27px] shrink-0 border-r border-[#858585] pr-px text-center">
              {h}
            </div>
          ))}
        </div>
      </div>
      <svg width="922" height="581" viewBox="660 248 922 581" className="bg-white">
        <g fill="#eff2f7">
          <rect x="660" y="248" width="26" height="581" />
          <rect x="793" y="248" width="28" height="581" />
          <rect x="928" y="248" width="406" height="581" />
          <rect x="1441" y="248" width="28" height="581" />
          <rect x="1576" y="248" width="6" height="581" />
        </g>
        <path d="M1090.500 248v581" stroke="#fff" />
        <TaskBar x1={686} x2={713} y={273} />
        <TaskBar x1={713} x2={740} y={294} />
        <TaskBar x1={740} x2={794} y={315} />
        <TaskBar x1={821} x2={1388} y={336} />
        <TaskBar x1={821} x2={902} y={378} />
        <TaskBar x1={902} x2={1388} y={418} />
        <TaskBar x1={1388} x2={1496} y={477} />
        <TaskBar x1={1496} x2={1523} y={536} />
        <TaskBar x1={1496} x2={1549.5} y={578} />
        <SumBar x1={685.5} x2={1387.5} y={252} />
        <SumBar x1={820.5} x2={1522.5} y={357} />
        <SumBar x1={1495.5} x2={1549.5} y={557} />
        <Link x1={713} y1={278.5} x2={717.5} y2={289} />
        <Link x1={740} y1={299.5} x2={744.5} y2={310} />
        <Link x1={794} y1={320.5} x2={821.5} y2={331} />
        <Link x1={794} y1={320.5} x2={815.5} y2={352} />
        <Link x1={902} y1={383.5} x2={906.5} y2={413} />
        <Link x1={1388} y1={423.5} x2={1392.5} y2={472} />
        <Link x1={1496} y1={482.5} x2={1500.5} y2={531} />
        <Link x1={1496} y1={482.5} x2={1500.5} y2={552} />
        <path d="M1549.500 249v580" stroke="#777" strokeDasharray="1 3" />
        <path d="M1549.500 557v9" stroke="#fff" strokeDasharray="3 1" />
      </svg>
    </div>
  );
}

function Tri({ dir }: { dir: "l" | "r" | "u" | "d" }) {
  const d = { l: "M8 0v9L3 4.500z", r: "M1 0v9l5-4.500z", u: "M0 7h9L4.500 2z", d: "M0 2h9L4.500 7z" }[dir];
  return (
    <Svg w={9} h={9}>
      <path d={d} fill="#1c1c1c" />
    </Svg>
  );
}

const ThumbH = () => (
  <div className="flex h-4 w-[17px] items-center justify-center gap-px rounded-[1px] border border-[#222] bg-linear-to-b from-[#6c6c6c] to-[#8a8a8a]">
    <span className="h-2 w-px bg-[#c4c4c4]" />
    <span className="h-2 w-px bg-[#c4c4c4]" />
    <span className="h-2 w-px bg-[#c4c4c4]" />
    <span className="h-2 w-px bg-[#c4c4c4]" />
  </div>
);

function StatusBar() {
  return (
    <div className="flex h-[22px] items-center border-t border-[#222] bg-linear-to-b from-[#484848] to-[#2e2e2e] text-[12px] text-[#e6e6e6]">
      <T w={40} className="ml-2 pb-px">
        Gotowy
      </T>
      <span className="ml-2 h-5 w-px bg-black shadow-[1px_0_0_#5a5a5a]" />
      <Svg className="ml-[22px]">
        <path d="M1 15l5-5" stroke="#9aa" />
        <path d="M9 .5l6.500 5-2 2-.5 4-2 2.500L1.500 6.500l3-1.500 4-.5z" fill="#2fc7cf" stroke="#0c7f88" strokeWidth=".7" />
        <path d="M9 2.500l-1 4-3 .5" stroke="#a5f0f4" fill="none" />
      </Svg>
      <T w={188} className="ml-1 pb-px">
        Nowe zadania: Zaplanowane ręcznie
      </T>
      <span className="ml-[9px] h-5 w-px bg-black shadow-[1px_0_0_#5a5a5a]" />
      <span className="ml-auto h-5 w-px bg-black shadow-[1px_0_0_#5a5a5a]" />
      <Svg w={212} h={20} className="ml-1">
        <rect x=".5" y=".5" width="18" height="18" rx="1.500" fill="#ffdf6e" stroke="#c98a1c" />
        <rect x="4.500" y="4" width="12" height="11" fill="#fff" stroke="#666" />
        <path d="M5 6.500h5M7 9h5M9 11h5M11 13h4" stroke="#333" />
        <g stroke="#555" strokeWidth=".6">
          <rect x="22.500" y="3.500" width="13" height="12" fill="#f2f2f2" />
          <path d="M22.500 6.500h13M26.500 6.500v9M29.500 6.500v9M32.500 6.500v9M26.500 9.500h9M26.500 12.500h9" stroke="#333" strokeWidth="1" />
        </g>
        <path d="M40 4h6v3h-6zM47 4h6v3h-6zM40 8.500h9v2.500h-9zM50 8.500h3v2.500h-3zM40 12.500h4v3h-4zM45 12.500h8v3h-8z" fill="#e2e2e2" />
        <path d="M58 4h4v3h-4zM62.800 4h4v3h-4zM67.500 4h4v3h-4zM58 8.200h4v3h-4zM62.800 8.200h4v3h-4zM67.500 8.200h4v3h-4zM58 12.400h4v3h-4zM62.800 12.400h4v3h-4zM67.500 12.400h4v3h-4z" fill="#f2f2f2" />
        <path d="M91 9.500h90M142 6v8" stroke="#111" />
        <path d="M91 10.500h90M143 6v8" stroke="#777" />
        <circle cx="84" cy="9.500" r="7" fill="url(#knob)" stroke="#5c5c5c" />
        <path d="M80 9.500h8" stroke="#222" strokeWidth="2" />
        <path d="M182.500 3.500h7v8l-3.500 3.500-3.500-3.500z" fill="url(#knob)" stroke="#444" />
        <circle cx="200" cy="9.500" r="7" fill="url(#knob)" stroke="#5c5c5c" />
        <path d="M196 9.500h8M200 5.500v8" stroke="#222" strokeWidth="2" />
      </Svg>
    </div>
  );
}

export default function App() {
  return (
    <div className="h-[870px] w-[1600px] overflow-hidden bg-[#696969] font-['Noto_Sans','Open_Sans',sans-serif]">
      <Defs />
      <TitleBar />
      <Ribbon />
      <div className="h-1 border-b border-[#999] bg-[#757575]" />
      <Timeline />
      <div className="h-[7px] border-t border-[#333] bg-white pt-px">
        <div className="h-[5px] border-b border-[#999] bg-[#696969]" />
      </div>
      <div className="flex h-[633px] border-l border-[#999]">
        <div className="flex w-[22px] shrink-0 items-center justify-center bg-black">
          <span className="rotate-180 text-[12px] text-white [writing-mode:vertical-rl]">
            <T w={78}>Wykres Gantta</T>
          </span>
        </div>
        <div className="flex w-[630px] shrink-0 flex-col">
          <Sheet />
          <div className="flex h-[17px] items-center bg-[#666] pl-[2px]">
            <Tri dir="l" />
            <span className="w-[6px]" />
            <ThumbH />
            <span className="flex-1" />
            <Tri dir="r" />
            <span className="w-1" />
          </div>
        </div>
        <div className="w-px shrink-0 bg-[#333]" />
        <div className="w-px shrink-0 bg-white" />
        <div className="w-[5px] shrink-0 border-r border-[#999] bg-[#696969]" />
        <div className="flex shrink-0 flex-col">
          <Chart />
          <div className="flex h-[17px] items-center bg-[#666] pl-[2px]">
            <Tri dir="l" />
            <span className="w-[115px]" />
            <ThumbH />
            <span className="flex-1" />
            <Tri dir="r" />
            <span className="w-[3px]" />
          </div>
        </div>
        <div className="flex w-[17px] shrink-0 flex-col items-center bg-[#666]">
          <span className="h-1" />
          <Tri dir="u" />
          <div className="mt-[3px] flex h-[17px] w-4 flex-col items-center justify-center gap-px rounded-[1px] border border-[#222] bg-linear-to-r from-[#6c6c6c] to-[#8a8a8a]">
            <span className="h-px w-2 bg-[#c4c4c4]" />
            <span className="h-px w-2 bg-[#c4c4c4]" />
            <span className="h-px w-2 bg-[#c4c4c4]" />
            <span className="h-px w-2 bg-[#c4c4c4]" />
          </div>
          <span className="flex-1" />
          <Tri dir="d" />
          <span className="mt-1 h-[17px] w-full bg-[#404040]" />
        </div>
        <div className="flex-1 bg-white" />
      </div>
      <div className="h-[2px] bg-white" />
      <StatusBar />
    </div>
  );
}
